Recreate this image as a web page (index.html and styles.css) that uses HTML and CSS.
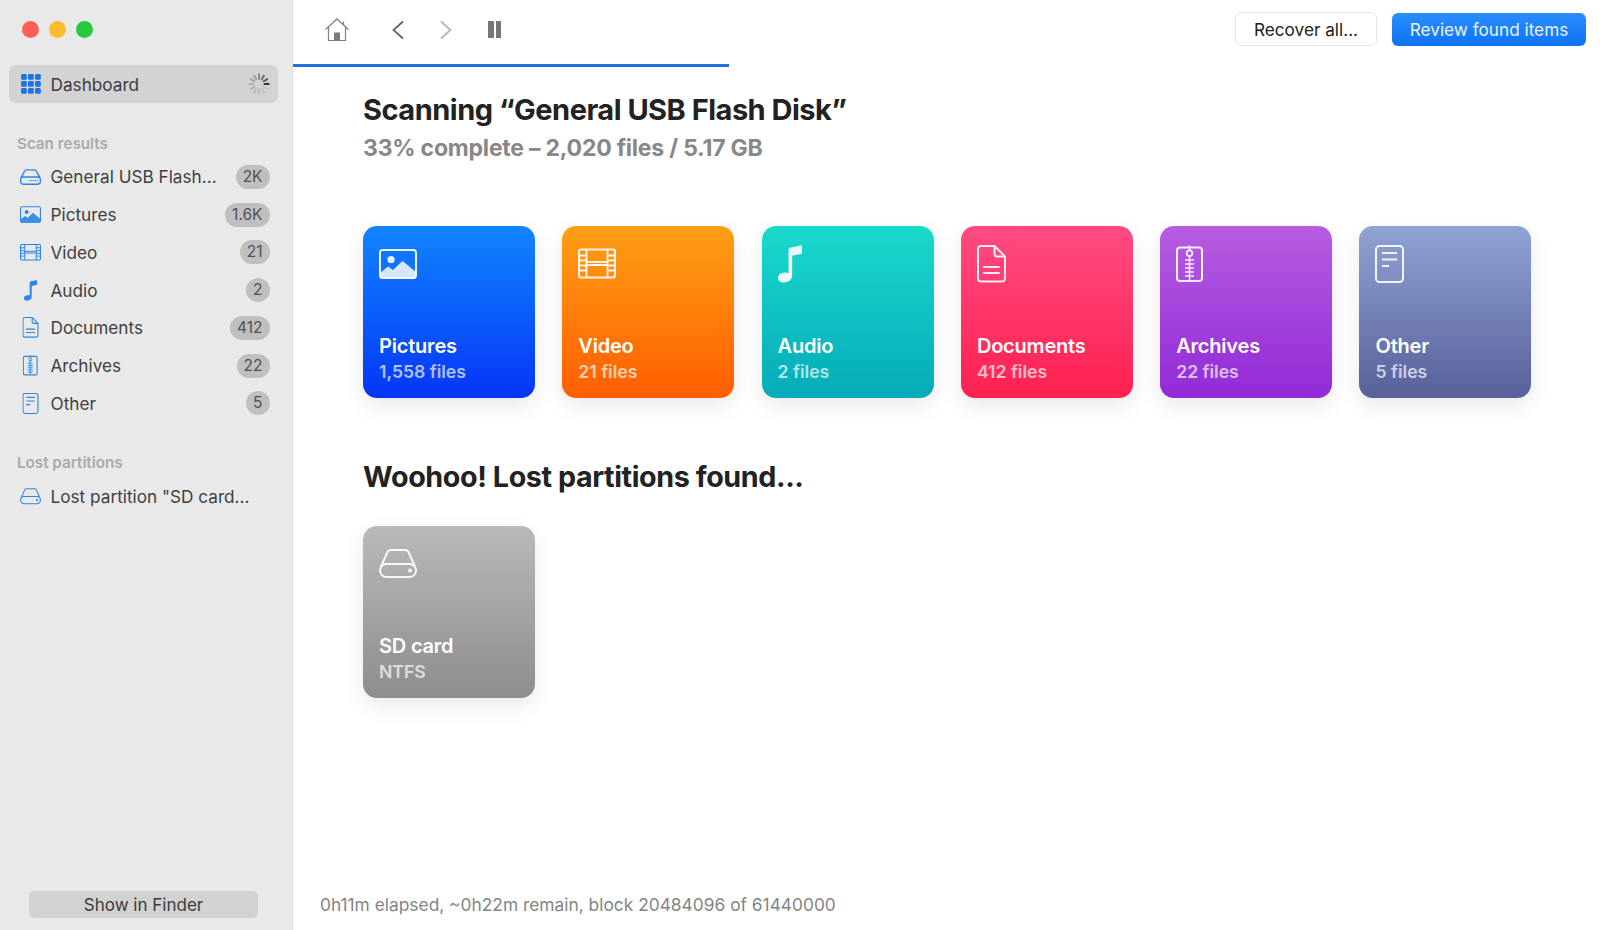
FILE: index.html
```html
<!DOCTYPE html>
<html lang="en">
<head>
<meta charset="utf-8">
<title>Disk Drill</title>
<link rel="stylesheet" href="styles.css">
</head>
<body>
<svg class="sprite" width="0" height="0" aria-hidden="true">
  <symbol id="i-pictures" viewBox="0 0 38 38">
    <rect x="1" y="5" width="36" height="28" rx="2.5" fill="none" stroke="currentColor" stroke-width="2"/>
    <circle cx="12" cy="14.5" r="3.6" fill="currentColor"/>
    <path d="M1 28 L9 21.5 L14 25 L23.5 16 L37 27 V31 a2.5 2.5 0 0 1 -2.5 2.5 H3.5 A2.5 2.5 0 0 1 1 31 Z" fill="currentColor" fill-opacity=".92"/>
  </symbol>
  <symbol id="i-video" viewBox="0 0 38 38">
    <rect x="1" y="4.5" width="36" height="28" rx="2" fill="none" stroke="currentColor" stroke-width="2"/>
    <path d="M8.5 4.5 V32.5 M29.5 4.5 V32.5 M8.5 17 H29.5 M8.5 20 H29.5 M1 10.5 H8.5 M1 15.5 H8.5 M1 20.5 H8.5 M1 25.5 H8.5 M29.5 10.5 H37 M29.5 15.5 H37 M29.5 20.5 H37 M29.5 25.5 H37" fill="none" stroke="currentColor" stroke-width="1.8"/>
  </symbol>
  <symbol id="i-audio" viewBox="0 0 38 38">
    <path d="M10.5 5.5 C10.5 3.5 11.5 2.8 13 2.4 L22.5 0.4 C23.4 0.2 24 0.8 24 1.6 V7.5 C24 8.4 23.5 8.9 22.7 9.1 L14.2 10.8 V30.5 C14.2 34.6 10.5 37.5 5.8 37.5 C2.5 37.5 0 35.8 0 33 C0 29.8 3.2 27.6 7.2 27.6 C8.6 27.6 9.7 27.8 10.5 28.2 Z" fill="currentColor"/>
  </symbol>
  <symbol id="i-doc" viewBox="0 0 38 38">
    <path d="M4 1 H17.5 L28 11.5 V33.5 a3 3 0 0 1 -3 3 H4 a3 3 0 0 1 -3 -3 V4 a3 3 0 0 1 3 -3 Z M17.5 1 V8.5 a3 3 0 0 0 3 3 H28 M7 22 H22 M7 28 H22" fill="none" stroke="currentColor" stroke-width="2" stroke-linejoin="round" stroke-linecap="round"/>
  </symbol>
  <symbol id="i-zip" viewBox="0 0 38 38">
    <rect x="1" y="2.5" width="25" height="33.5" rx="3" fill="none" stroke="currentColor" stroke-width="2"/>
    <circle cx="13.5" cy="8.2" r="2.8" fill="none" stroke="currentColor" stroke-width="1.8"/>
    <path d="M13.5 0.5 V5 M13.5 11 V36 M9 15 H18 M9 19 H18 M9 23 H18 M9 27 H18 M9 31 H18" fill="none" stroke="currentColor" stroke-width="1.6"/>
  </symbol>
  <symbol id="i-other" viewBox="0 0 38 38">
    <rect x="1" y="1" width="27" height="36" rx="3.5" fill="none" stroke="currentColor" stroke-width="2"/>
    <path d="M7 8 H22 M7 14.5 H22 M7 21 H14" fill="none" stroke="currentColor" stroke-width="2"/>
  </symbol>
  <symbol id="i-disk" viewBox="0 0 38 38">
    <path d="M1 25.5 a6.5 6.5 0 0 1 6.5 -6.5 H30.5 a6.5 6.5 0 0 1 6.5 6.5 a6.5 6.5 0 0 1 -6.5 6.5 H7.5 A6.5 6.5 0 0 1 1 25.5 Z M2 21.5 L8.5 7 a3.5 3.5 0 0 1 3 -2 H26.5 a3.5 3.5 0 0 1 3 2 L36 21.5" fill="none" stroke="currentColor" stroke-width="2" stroke-linejoin="round"/>
    <circle cx="31" cy="25.5" r="2" fill="currentColor"/>
  </symbol>
  <symbol id="i-usb" viewBox="0 0 38 38">
    <path d="M1 25 a5 5 0 0 1 5 -5 H32 a5 5 0 0 1 5 5 V28 a5 5 0 0 1 -5 5 H6 a5 5 0 0 1 -5 -5 Z M2 21 L8.5 9 a3.5 3.5 0 0 1 3 -2 H26.5 a3.5 3.5 0 0 1 3 2 L36 21" fill="none" stroke="currentColor" stroke-width="2.6" stroke-linejoin="round"/>
    <path d="M17 26.5 H32" fill="none" stroke="currentColor" stroke-width="2.6" stroke-dasharray="2 1.4"/>
  </symbol>
</svg>

<div class="app">
  <aside class="sidebar">
    <div class="lights">
      <span class="light light-red"></span>
      <span class="light light-yellow"></span>
      <span class="light light-green"></span>
    </div>

    <div class="nav-active">
      <svg class="grid-icon" viewBox="0 0 20 20" aria-hidden="true">
        <g fill="#1a74e6">
          <rect x="0" y="0" width="5.8" height="5.8" rx="1.4"/><rect x="7" y="0" width="5.8" height="5.8" rx="1.4"/><rect x="14" y="0" width="5.8" height="5.8" rx="1.4"/>
          <rect x="0" y="7" width="5.8" height="5.8" rx="1.4"/><rect x="7" y="7" width="5.8" height="5.8" rx="1.4"/><rect x="14" y="7" width="5.8" height="5.8" rx="1.4"/>
          <rect x="0" y="14" width="5.8" height="5.8" rx="1.4"/><rect x="7" y="14" width="5.8" height="5.8" rx="1.4"/><rect x="14" y="14" width="5.8" height="5.8" rx="1.4"/>
        </g>
      </svg>
      <span class="nav-label">Dashboard</span>
      <svg class="spinner" viewBox="0 0 24 24" aria-hidden="true">
        <g stroke-width="2.2" stroke-linecap="round" fill="none">
          <path d="M12 1.5 V6.5" stroke="#8a8a8a"/>
          <path d="M17.2 2.9 L15 6.8" stroke="#6e6e6e"/>
          <path d="M21 6.8 L17.2 9" stroke="#5a5a5a"/>
          <path d="M22.5 12 H18" stroke="#333"/>
          <path d="M21 17.2 L17.2 15" stroke="#c4c4c4"/>
          <path d="M17.2 21 L15 17.2" stroke="#c0c0c0"/>
          <path d="M12 22.5 V18" stroke="#bcbcbc"/>
          <path d="M6.8 21 L9 17.2" stroke="#b8b8b8"/>
          <path d="M2.9 17.2 L6.8 15" stroke="#b4b4b4"/>
          <path d="M1.5 12 H6" stroke="#b0b0b0"/>
          <path d="M2.9 6.8 L6.8 9" stroke="#a8a8a8"/>
          <path d="M6.8 2.9 L9 6.8" stroke="#a0a0a0"/>
        </g>
      </svg>
    </div>

    <h2 class="side-head">Scan results</h2>
    <ul class="side-list">
      <li class="side-row"><svg class="side-icon" viewBox="0 0 38 38"><use href="#i-usb"/></svg><span class="side-name">General USB Flash...</span><span class="badge">2K</span></li>
      <li class="side-row"><svg class="side-icon" viewBox="0 0 38 38"><use href="#i-pictures"/></svg><span class="side-name">Pictures</span><span class="badge">1.6K</span></li>
      <li class="side-row"><svg class="side-icon" viewBox="0 0 38 38"><use href="#i-video"/></svg><span class="side-name">Video</span><span class="badge">21</span></li>
      <li class="side-row"><svg class="side-icon" viewBox="-7 0 38 38"><use href="#i-audio"/></svg><span class="side-name">Audio</span><span class="badge">2</span></li>
      <li class="side-row"><svg class="side-icon" viewBox="-4.5 0 38 38"><use href="#i-doc"/></svg><span class="side-name">Documents</span><span class="badge">412</span></li>
      <li class="side-row"><svg class="side-icon" viewBox="-5 0 38 38"><use href="#i-zip"/></svg><span class="side-name">Archives</span><span class="badge">22</span></li>
      <li class="side-row"><svg class="side-icon" viewBox="-4.5 0 38 38"><use href="#i-other"/></svg><span class="side-name">Other</span><span class="badge">5</span></li>
    </ul>

    <h2 class="side-head">Lost partitions</h2>
    <ul class="side-list">
      <li class="side-row"><svg class="side-icon" viewBox="0 0 38 38"><use href="#i-disk"/></svg><span class="side-name">Lost partition "SD card...</span></li>
    </ul>

    <button class="finder-btn" type="button">Show in Finder</button>
  </aside>

  <main class="main">
    <header class="toolbar">
      <svg class="tool-home" viewBox="0 0 28 26" aria-hidden="true">
        <path d="M2.5 12.5 L14 2 L25.5 12.5 M5.5 10 V23.5 H22.5 V10 M20.5 4.5 V8" fill="none" stroke="#808080" stroke-width="1.2" stroke-linejoin="round"/>
        <rect x="11" y="15.5" width="6" height="8" fill="#7a7a7a"/>
      </svg>
      <svg class="tool-chevron tool-back" viewBox="0 0 14 20" aria-hidden="true"><path d="M12 1.5 L2.5 10 L12 18.5" fill="none" stroke="#666" stroke-width="1.8"/></svg>
      <svg class="tool-chevron tool-forward" viewBox="0 0 14 20" aria-hidden="true"><path d="M2 1.5 L11.5 10 L2 18.5" fill="none" stroke="#b5b5b5" stroke-width="1.8"/></svg>
      <div class="tool-pause"><span></span><span></span></div>
      <div class="tool-actions">
        <button class="btn btn-light" type="button">Recover all...</button>
        <button class="btn btn-blue" type="button">Review found items</button>
      </div>
    </header>
    <div class="progress"><div class="progress-bar"></div></div>

    <div class="content">
      <h1 class="title">Scanning “General USB Flash Disk”</h1>
      <p class="subtitle">33% complete – 2,020 files / 5.17 GB</p>

      <div class="cards">
        <article class="card card-blue"><svg class="card-icon" viewBox="0 0 38 38"><use href="#i-pictures"/></svg><div class="card-text"><h3 class="card-name">Pictures</h3><p class="card-sub">1,558 files</p></div></article>
        <article class="card card-orange"><svg class="card-icon" viewBox="0 0 38 38"><use href="#i-video"/></svg><div class="card-text"><h3 class="card-name">Video</h3><p class="card-sub">21 files</p></div></article>
        <article class="card card-teal"><svg class="card-icon" viewBox="0 0 38 38"><use href="#i-audio"/></svg><div class="card-text"><h3 class="card-name">Audio</h3><p class="card-sub">2 files</p></div></article>
        <article class="card card-pink"><svg class="card-icon" viewBox="0 0 38 38"><use href="#i-doc"/></svg><div class="card-text"><h3 class="card-name">Documents</h3><p class="card-sub">412 files</p></div></article>
        <article class="card card-purple"><svg class="card-icon" viewBox="0 0 38 38"><use href="#i-zip"/></svg><div class="card-text"><h3 class="card-name">Archives</h3><p class="card-sub">22 files</p></div></article>
        <article class="card card-slate"><svg class="card-icon" viewBox="0 0 38 38"><use href="#i-other"/></svg><div class="card-text"><h3 class="card-name">Other</h3><p class="card-sub">5 files</p></div></article>
      </div>

      <h2 class="section-title">Woohoo! Lost partitions found...</h2>
      <div class="cards">
        <article class="card card-grey"><svg class="card-icon" viewBox="0 0 38 38"><use href="#i-disk"/></svg><div class="card-text"><h3 class="card-name">SD card</h3><p class="card-sub">NTFS</p></div></article>
      </div>
    </div>

    <footer class="status">0h11m elapsed, ~0h22m remain, block 20484096 of 61440000</footer>
  </main>
</div>
</body>
</html>
```

FILE: styles.css
```css
* { box-sizing: border-box; }
html, body { margin: 0; height: 100%; }
body {
  font-family: Inter, "Liberation Sans", sans-serif;
  background: #fff;
  color: #222;
  overflow: hidden;
}
.sprite { position: absolute; }
h1, h2, h3, p, ul { margin: 0; padding: 0; }
ul { list-style: none; }

.app { display: flex; height: 930px; }

/* Sidebar */
.sidebar {
  width: 293px;
  flex: none;
  display: flex;
  flex-direction: column;
  background: #e9e9e9;
  border-right: 1px solid #dcdcdc;
  padding: 0 14px 12px 9px;
}
.lights { display: flex; gap: 10px; padding: 21px 0 0 13px; }
.light { width: 17px; height: 17px; border-radius: 50%; }
.light-red { background: #ff5f57; }
.light-yellow { background: #febc2e; }
.light-green { background: #28c840; }

.nav-active {
  display: flex;
  align-items: center;
  height: 38px;
  margin-top: 27px;
  padding: 0 8px 0 12px;
  border-radius: 7px;
  background: #d3d3d3;
}
.grid-icon { width: 20px; height: 20px; flex: none; }
.nav-label { margin-left: 9.5px; font-size: 17.2px; color: #3c3c3c; flex: 1; }
.spinner { width: 22px; height: 22px; flex: none; }

.side-head {
  margin: 32px 0 5px 8px;
  height: 18px;
  line-height: 18px;
  font-size: 15.2px;
  font-weight: 600;
  color: #a9a9a9;
}
.side-list + .side-head { margin-top: 32px; }
.side-row {
  display: flex;
  align-items: center;
  height: 37.75px;
  padding: 0 8.5px 0 11px;
}
.side-icon { width: 21px; height: 21px; flex: none; color: #2f85e6; }
.side-name { margin-left: 9.5px; flex: 1; font-size: 17.2px; color: #3f3f3f; white-space: nowrap; }
.badge {
  height: 24px;
  min-width: 23px;
  padding: 0 7px;
  border-radius: 12px;
  background: #bfbfbf;
  color: #505050;
  font-size: 15.5px;
  line-height: 24px;
  text-align: center;
}
.finder-btn {
  margin: auto 20px 0;
  height: 27px;
  border: 0;
  border-radius: 5px;
  background: #d2d2d2;
  color: #3a3a3a;
  font: 400 17px Inter, "Liberation Sans", sans-serif;
}

/* Main */
.main { flex: 1; min-width: 0; display: flex; flex-direction: column; }
.toolbar {
  display: flex;
  align-items: center;
  height: 64px;
  padding: 0 14px 5px 30px;
}
.tool-home { width: 28px; height: 26px; }
.tool-chevron { width: 14px; height: 20px; }
.tool-back { margin-left: 40px; }
.tool-forward { margin-left: 34px; }
.tool-pause { display: flex; gap: 2px; margin-left: 35px; }
.tool-pause span { width: 5.5px; height: 17px; background: #777; }
.tool-actions { margin-left: auto; margin-bottom: 1px; display: flex; gap: 15px; align-items: center; }
.btn {
  font: 400 17.2px Inter, "Liberation Sans", sans-serif;
  border-radius: 6px;
}
.btn-light {
  width: 142px;
  height: 34px;
  background: #fff;
  border: 1px solid #e4e4e4;
  color: #222;
}
.btn-blue {
  width: 194px;
  height: 33px;
  border: 0;
  background: linear-gradient(#2a8dff, #0f73f2);
  color: #e9f3ff;
}
.progress { height: 3px; background: #fff; }
.progress-bar { width: 436px; height: 3px; background: #1f6fdc; }

.content { flex: 1; padding: 25px 0 0 70px; }
.title {
  font-size: 29px;
  line-height: 36px;
  font-weight: 700;
  letter-spacing: -0.5px;
  color: #222;
}
.subtitle {
  margin-top: 2px;
  font-size: 23px;
  line-height: 36px;
  font-weight: 700;
  color: #878787;
  letter-spacing: -0.22px;
}
.cards { display: flex; gap: 27.3px; margin-top: 60px; }
.card {
  width: 172px;
  height: 172px;
  flex: none;
  display: flex;
  flex-direction: column;
  justify-content: space-between;
  padding: 19px 16px 14px;
  border-radius: 14px;
  color: #fff;
  box-shadow: 0 8px 22px rgba(0, 0, 0, .09);
}
.card-icon { width: 38px; height: 38px; display: block; color: rgba(255, 255, 255, .9); overflow: visible; }
.card-name { font-size: 20px; line-height: 26px; font-weight: 600; letter-spacing: -0.2px; }
.card-sub { margin-top: 1px; font-size: 17.6px; line-height: 24px; font-weight: 600; opacity: .68; }
.card-blue { background: linear-gradient(#1285ff, #0535f6); }
.card-orange { background: linear-gradient(#ff9f16, #ff5e00); }
.card-teal { background: linear-gradient(#1bd9cd, #04abb8); }
.card-pink { background: linear-gradient(#ff4b82, #ff2050); }
.card-purple { background: linear-gradient(#b65de0, #922ad7); }
.card-slate { background: linear-gradient(#8fa3d4, #58609a); }
.card-grey { background: linear-gradient(#b9b9b9, #8d8d8d); }

.section-title {
  margin-top: 61px;
  font-size: 28.7px;
  line-height: 36px;
  font-weight: 700;
  letter-spacing: -0.4px;
  color: #222;
}
.section-title + .cards { margin-top: 31px; }

.status {
  padding: 0 0 13px 27px;
  font-size: 17.35px;
  line-height: 24px;
  color: #858585;
}
```
